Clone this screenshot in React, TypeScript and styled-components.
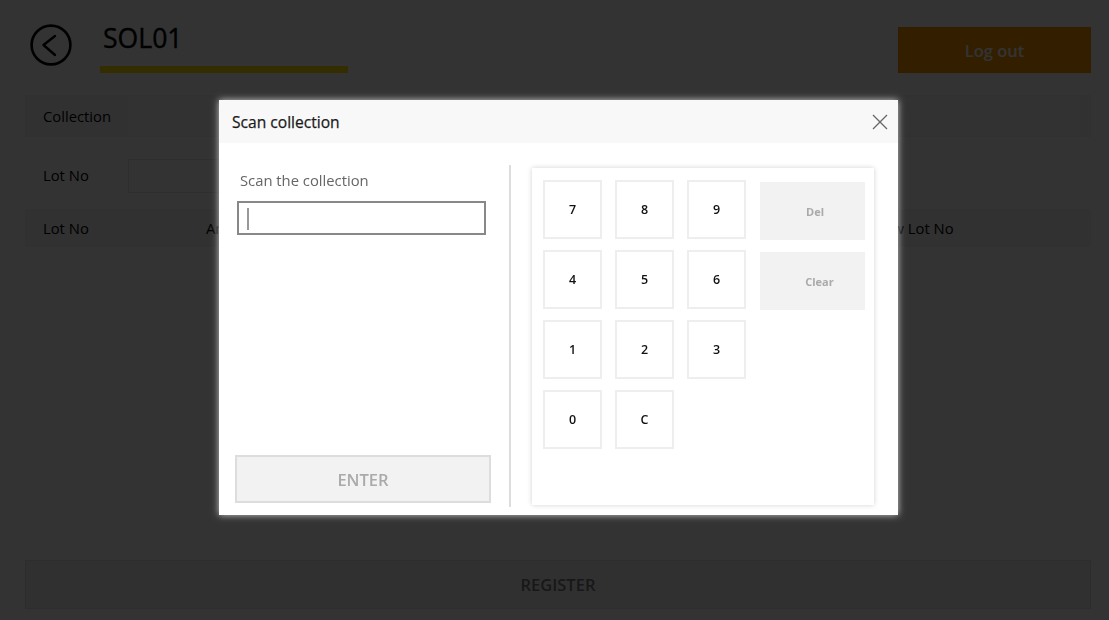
import React from 'react';
import styled, { createGlobalStyle } from 'styled-components';

const GlobalStyle = createGlobalStyle`
  html, body {
    margin: 0;
    padding: 0;
    height: 100%;
    background: #fff;
    overflow: hidden;
  }
  * {
    box-sizing: border-box;
  }
  body {
    font-family: "Open Sans", "Liberation Sans", sans-serif;
  }
`;

const KEYS = ['7', '8', '9', '4', '5', '6', '1', '2', '3', '0', 'C'];

const BackIcon = () => (
  <svg width="42" height="42" viewBox="0 0 42 42" fill="none" stroke="#000" strokeWidth="2.6">
    <circle cx="21" cy="21" r="19.4" />
    <path d="M25 12 L13.5 21 L25 31" strokeWidth="2.4" strokeLinecap="round" strokeLinejoin="round" />
  </svg>
);

const CloseIcon = () => (
  <svg width="16" height="16" viewBox="0 0 16 16" fill="none" stroke="#666" strokeWidth="1.3">
    <path d="M1 1 L15 15 M15 1 L1 15" />
  </svg>
);

export default function App() {
  return (
    <>
      <GlobalStyle />
      <Page>
        <Header>
          <BackIcon />
          <TitleBlock>
            <Title>SOL01</Title>
            <TitleBar />
          </TitleBlock>
          <LogoutButton>Log out</LogoutButton>
        </Header>
        <CollectionRow>
          <FieldLabel>Collection</FieldLabel>
          <CollectionField />
        </CollectionRow>
        <LotRow>
          <FieldLabel>Lot No</FieldLabel>
          <LotInput />
        </LotRow>
        <TableHead>
          <HeadCell $width="163px">Lot No</HeadCell>
          <HeadCell $width="667px">Amount</HeadCell>
          <HeadCell $width="auto">New Lot No</HeadCell>
        </TableHead>
        <TableBody />
        <RegisterButton>REGISTER</RegisterButton>
      </Page>
      <Overlay />
      <Modal>
        <ModalHeader>
          <ModalTitle>Scan collection</ModalTitle>
          <CloseIcon />
        </ModalHeader>
        <ModalBody>
          <ScanColumn>
            <ScanLabel>Scan the collection</ScanLabel>
            <ScanInput>
              <Caret />
            </ScanInput>
            <EnterButton>ENTER</EnterButton>
          </ScanColumn>
          <Divider />
          <KeypadCard>
            <KeyGrid>
              {KEYS.map((key) => (
                <Key key={key}>{key}</Key>
              ))}
            </KeyGrid>
            <ActionColumn>
              <ActionKey>Del</ActionKey>
              <ActionKey $shift>Clear</ActionKey>
            </ActionColumn>
          </KeypadCard>
        </ModalBody>
      </Modal>
    </>
  );
}

const Page = styled.div`
  width: 1109px;
  height: 620px;
  padding: 25px 18px 11px 25px;
  display: flex;
  flex-direction: column;
  color: #000;
`;

const Header = styled.header`
  display: flex;
  align-items: flex-start;
  height: 70px;
  padding-left: 5px;

  > svg {
    margin-top: -1px;
    flex: none;
  }
`;

const TitleBlock = styled.div`
  margin-left: 28px;
  width: 248px;
`;

const Title = styled.h1`
  margin: -5px 0 0 3px;
  font-size: 26.6px;
  line-height: 37px;
  font-weight: 400;
  -webkit-text-stroke: 0.4px #000;
  color: #000;
`;

const TitleBar = styled.div`
  height: 7px;
  margin-top: 9px;
  background: #ffe000;
`;

const LogoutButton = styled.div`
  margin: 2px 0 0 auto;
  width: 193px;
  height: 46px;
  background: #ff9900;
  color: #fff;
  font-size: 16.5px;
  font-weight: 600;
  display: flex;
  align-items: center;
  justify-content: center;
  border: 1px solid #f29100;
`;

const CollectionRow = styled.div`
  height: 42px;
  display: flex;
  align-items: center;
  padding: 0 11px 0 18px;
  background: #f3f6fa;
`;

const CollectionField = styled.div`
  flex: 1;
  height: 38px;
  background: #f7f9fc;
`;

const FieldLabel = styled.span`
  font-size: 14.8px;
  color: #000;
  width: 85px;
  flex: none;
`;

const LotRow = styled.div`
  margin-top: 22px;
  height: 34px;
  display: flex;
  align-items: center;
  padding-left: 18px;
  padding-bottom: 0;

  > span {
    margin-top: -2px;
  }
`;

const LotInput = styled.div`
  width: 300px;
  height: 34px;
  border: 1px solid #e6e6e6;
  background: #fff;
`;

const TableHead = styled.div`
  margin-top: 16px;
  height: 38px;
  display: flex;
  align-items: center;
  padding-left: 18px;
  background: #f2f2f2;
`;

const HeadCell = styled.span<{ $width: string }>`
  width: ${(p) => p.$width};
  font-size: 14.8px;
  color: #000;
`;

const TableBody = styled.div`
  flex: 1;
`;

const RegisterButton = styled.div`
  height: 49px;
  border: 1px solid #e0e0e0;
  background: #f0f0f0;
  color: #777;
  font-size: 16.5px;
  font-weight: 600;
  display: flex;
  align-items: center;
  justify-content: center;
`;

const Overlay = styled.div`
  position: fixed;
  inset: 0;
  background: rgba(0, 0, 0, 0.8);
`;

const Modal = styled.div`
  position: fixed;
  left: 219px;
  top: 100px;
  width: 679px;
  height: 415px;
  background: #fff;
  box-shadow: 0 0 7px rgba(255, 255, 255, 0.75);
  display: flex;
  flex-direction: column;
`;

const ModalHeader = styled.div`
  height: 43px;
  flex: none;
  background: #f8f8f8;
  display: flex;
  align-items: center;
  justify-content: space-between;
  padding: 0 10px 0 13px;
`;

const ModalTitle = styled.span`
  font-size: 15.6px;
  font-weight: 400;
  -webkit-text-stroke: 0.25px #1a1a1a;
  color: #1a1a1a;
`;

const ModalBody = styled.div`
  flex: 1;
  display: flex;
  padding: 22px 23px 8px 16px;
`;

const ScanColumn = styled.div`
  width: 256px;
  display: flex;
  flex-direction: column;
`;

const ScanLabel = styled.label`
  margin: 6px 0 0 5px;
  font-size: 14.8px;
  line-height: 19px;
  color: #666;
`;

const ScanInput = styled.div`
  margin: 11px 0 0 2px;
  width: 249px;
  height: 34px;
  border: 2px solid #888;
  padding: 5px 8px;
`;

const Caret = styled.div`
  width: 2px;
  height: 22px;
  background: #999;
`;

const EnterButton = styled.div`
  margin-top: auto;
  margin-bottom: 4px;
  height: 48px;
  background: #f2f2f2;
  border: 2px solid #ddd;
  color: #aaa;
  font-size: 16.5px;
  font-weight: 600;
  display: flex;
  align-items: center;
  justify-content: center;
`;

const Divider = styled.div`
  width: 2px;
  margin-left: 18px;
  background: #ddd;
`;

const KeypadCard = styled.div`
  margin: 3px 0 2px 21px;
  width: 342px;
  background: #fff;
  box-shadow: 0 0 5px rgba(0, 0, 0, 0.18);
  padding: 12px 9px 0 11px;
  display: flex;
  align-items: flex-start;
`;

const KeyGrid = styled.div`
  display: grid;
  grid-template-columns: 59px 59px 59px;
  grid-auto-rows: 59px;
  column-gap: 13px;
  row-gap: 11px;
`;

const Key = styled.div`
  border: 2px solid #eeeeee;
  background: #fff;
  color: #111;
  font-size: 12.5px;
  font-weight: 600;
  display: flex;
  align-items: center;
  justify-content: center;
`;

const ActionColumn = styled.div`
  margin: 2px 0 0 14px;
  width: 105px;
  display: flex;
  flex-direction: column;
  gap: 12px;
`;

const ActionKey = styled.div<{ $shift?: boolean }>`
  height: 58px;
  background: #f2f2f2;
  color: #aaa;
  font-size: 11px;
  font-weight: 700;
  display: flex;
  align-items: center;
  justify-content: center;
  padding-left: ${(p) => (p.$shift ? '14px' : '5px')};
`;
